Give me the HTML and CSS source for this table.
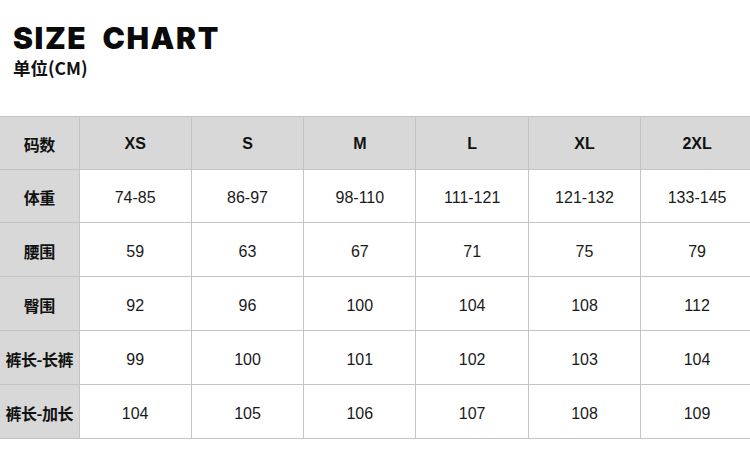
FILE: index.html
```html
<!DOCTYPE html>
<html lang="zh">
<head>
<meta charset="utf-8">
<title>Size Chart</title>
<link rel="stylesheet" href="styles.css">
</head>
<body>
<header class="head">
  <h1 class="title">SIZE&nbsp; CHART</h1>
  <div class="unit">单位(CM)</div>
</header>
<table class="chart">
  <colgroup><col class="c-label"><col><col><col><col><col><col></colgroup>
  <thead>
    <tr><th class="label">码数</th><th>XS</th><th>S</th><th>M</th><th>L</th><th>XL</th><th>2XL</th></tr>
  </thead>
  <tbody>
    <tr><th class="label">体重</th><td>74-85</td><td>86-97</td><td>98-110</td><td>111-121</td><td>121-132</td><td>133-145</td></tr>
    <tr><th class="label">腰围</th><td>59</td><td>63</td><td>67</td><td>71</td><td>75</td><td>79</td></tr>
    <tr><th class="label">臀围</th><td>92</td><td>96</td><td>100</td><td>104</td><td>108</td><td>112</td></tr>
    <tr><th class="label">裤长-长裤</th><td>99</td><td>100</td><td>101</td><td>102</td><td>103</td><td>104</td></tr>
    <tr><th class="label">裤长-加长</th><td>104</td><td>105</td><td>106</td><td>107</td><td>108</td><td>109</td></tr>
  </tbody>
</table>
</body>
</html>
```
FILE: styles.css
```css
* { box-sizing: border-box; }
html, body { margin: 0; padding: 0; background: #fff; }
body {
  width: 750px;
  height: 472px;
  overflow: hidden;
  font-family: "Liberation Sans", Arial, "Noto Sans CJK SC", sans-serif;
  color: #111;
}
.head {
  padding: 22px 0 0 13px;
  height: 116px;
}
.title {
  margin: 0;
  font-family: Inter, "Liberation Sans", sans-serif;
  font-weight: 900;
  font-size: 30px;
  line-height: 32px;
  letter-spacing: 1.6px;
  color: #0a0a0a;
}
.unit {
  margin-top: 3px;
  font-family: "Noto Sans CJK SC", sans-serif;
  font-weight: 700;
  font-size: 17.5px;
  line-height: 22px;
  color: #111;
}
.chart {
  width: 753px;
  border-collapse: collapse;
  table-layout: fixed;
}
.c-label { width: 79px; }
.chart th, .chart td {
  border: 1px solid #c4c4c4;
  height: 54px;
  padding: 2px 0 0;
  text-align: center;
  vertical-align: middle;
  font-size: 16px;
}
.chart tr:first-child th, .chart tr:first-child td { height: 53px; }
.chart td { font-weight: 400; color: #1a1a1a; padding-top: 4px; }
.chart thead th {
  background: #d8d8d8;
  font-weight: 700;
  color: #111;
}
.chart th.label {
  background: #d8d8d8;
  font-family: "Noto Sans CJK SC", sans-serif;
  font-weight: 700;
  font-size: 16px;
  color: #111;
  white-space: nowrap;
  letter-spacing: -0.5px;
}
.chart tr > :first-child { border-left: none; }
.chart tr > :last-child { border-right: none; }
```
